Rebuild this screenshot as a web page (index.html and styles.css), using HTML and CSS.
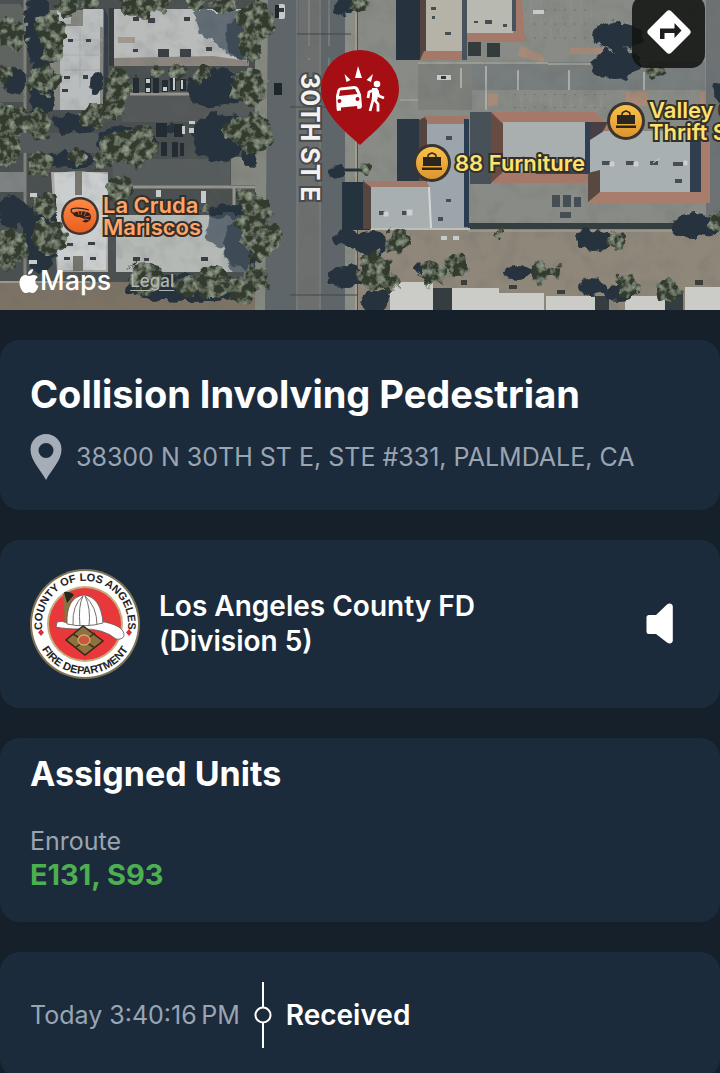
FILE: index.html
```html
<!DOCTYPE html>
<html lang="en">
<head>
<meta charset="utf-8">
<meta name="viewport" content="width=device-width, initial-scale=1">
<title>Collision Involving Pedestrian</title>
<link rel="stylesheet" href="styles.css">
</head>
<body>
<main class="screen">
  <section class="map" aria-label="Map">
    <svg class="aerial" viewBox="0 0 720 310" preserveAspectRatio="xMidYMid slice" aria-hidden="true">
      <defs>
        <filter id="leaf" x="-5%" y="-5%" width="110%" height="110%">
          <feTurbulence type="fractalNoise" baseFrequency="0.09" numOctaves="2" seed="4" result="n"/>
          <feDisplacementMap in="SourceGraphic" in2="n" scale="16" xChannelSelector="R" yChannelSelector="G" result="d"/>
          <feTurbulence type="fractalNoise" baseFrequency="0.13" numOctaves="3" seed="9"/>
          <feColorMatrix values="0 0 0 0 0.36  0 0 0 0 0.42  0 0 0 0 0.32  2 0 0 0 -0.85" result="t"/>
          <feComposite in="t" in2="d" operator="in" result="tt"/>
          <feMerge result="m"><feMergeNode in="d"/><feMergeNode in="tt"/></feMerge>
          <feGaussianBlur in="m" stdDeviation="0.7"/>
        </filter>
        <filter id="shade" x="-5%" y="-5%" width="110%" height="110%">
          <feTurbulence type="fractalNoise" baseFrequency="0.1" numOctaves="2" seed="2" result="n"/>
          <feDisplacementMap in="SourceGraphic" in2="n" scale="12" xChannelSelector="R" yChannelSelector="G" result="d"/>
          <feGaussianBlur in="d" stdDeviation="0.7"/>
        </filter>
        <filter id="ground" x="0" y="0" width="100%" height="100%">
          <feTurbulence type="fractalNoise" baseFrequency="0.05" numOctaves="4" seed="7"/>
          <feColorMatrix values="0 0 0 0 0.12  0 0 0 0 0.13  0 0 0 0 0.13  1.6 0 0 0 -0.72"/>
        </filter>
        <pattern id="stalls" width="10" height="14" patternUnits="userSpaceOnUse"><path d="M1 0v9" stroke="#989992" stroke-width="1"/><circle cx="5" cy="10" r="1.3" fill="#686b69"/></pattern>
      </defs>
      <rect width="720" height="310" fill="#4a4f50"/>
      <!-- west lots -->
      <path d="M0 4h20l5 8v90H0z" fill="#5f6460"/>
      <path d="M25 0v310" stroke="#81837a" stroke-width="3"/>
      <rect x="14" y="133" width="86" height="20" fill="#54595b"/>
      <rect x="0" y="172" width="26" height="20" fill="#7e8283"/>
      <path d="M118 94h140v28H122z" fill="#555859"/>
      <path d="M113 159h117v27H113z" fill="#565b5c"/>
      <path d="M130 94h60M120 187h140M234 187v24" stroke="#94948c" stroke-width="3" fill="none"/>
      <rect x="231" y="157" width="27" height="28" fill="#858880"/>
      <path d="M0 282h258v28H0z" fill="#7d7365"/>
      <path d="M0 282h90" stroke="#9b9890" stroke-width="2"/>
      <path d="M255 0h13v310h-13z" fill="#85887f"/>
      <!-- west roofs -->
      <path d="M50 10h55v100H50z" fill="#858680"/>
      <path d="M60 26h40v84H60zM83 9h20v18H83zM57 10h14v14H57z" fill="#b9bdbd"/>
      <path d="M104 8l4 8v92h-5z" fill="#343e48"/>
      <path d="M62 40h40M63 55h38M64 70h36M80 27v60" stroke="#a8adaf" stroke-width="1"/>
      <path d="M113 9h134v55H113z" fill="#b9bcba"/>
      <path d="M113 58l100-2 36 5v5H111z" fill="#8b857e"/>
      <path d="M109 8h5v58h-5z" fill="#363b40"/>
      <path d="M118 37h17v6h-17z" fill="#a3988e"/>
      <path d="M51 172h57v100H57z" fill="#aaa9a2"/>
      <path d="M54 173l24-2 30 3-2 96H58z" fill="#cbcecf"/>
      <path d="M75 171h7v24h-7zM73 256h10v15H73z" fill="#77756e"/>
      <path d="M115 215h133v57H116z" fill="#b5b9b6"/>
      <path d="M108 205h8v68h-8z" fill="#4b5053"/>
      <g fill="#383e43">
        <path d="M133 17h6v4h-6zM148 18h7v5h-7zM184 17h6v4h-6zM133 49h5v3h-5zM158 49h11v8h-11zM180 49h11v8h-11zM206 47h6v4h-6zM68 39h5v3h-5zM86 39h5v3h-5zM64 76h6v3h-6zM83 75h5v4h-5zM62 89h6v3h-6zM67 243h6v3h-6zM88 242h7v3h-7zM64 257h6v3h-6zM90 257h6v3h-6zM133 257h7v4h-7zM144 258h5v3h-5zM201 257h7v4h-7z"/>
      </g>
      <!-- 30th Street -->
      <path d="M268 0h77v310h-80z" fill="#5f666a"/>
      <path d="M299 0h22v310h-25z" fill="#6d6f6e"/>
      <path d="M297 0v310M320 0v310" stroke="#7f8380" stroke-width="1"/>
      <path d="M309 0v60M329 0v70" stroke="#8d9292" stroke-width="1" stroke-dasharray="46 12"/>
      <path d="M345 0h12v310h-12z" fill="#8b8e86"/>
      <path d="M356 0v310" stroke="#a39c8c" stroke-width="2"/>
      <path d="M297 34h54M290 107h55M290 295h72" stroke="#41474a" stroke-width="1"/>
      <!-- east lots -->
      <path d="M358 0h362v230H358z" fill="#898c86"/>
      <path d="M463 62h242v28H463z" fill="#787d7d"/>
      <path d="M418 62h54v48h-54z" fill="#7d807b"/>
      <path d="M418 63h130M548 64h100M400 100h18" stroke="#9b9c94" stroke-width="2"/>
      <path d="M518 70v20M569 70v20M644 72v18M486 66v44M461 68v20" stroke="#aaaca6" stroke-width="2"/>
      <rect x="506" y="94" width="100" height="14" fill="url(#stalls)" opacity=".6"/>
      <rect x="525" y="0" width="70" height="42" fill="url(#stalls)" opacity=".4"/>
      <path d="M570 48h34v6h-34zM520 46l22 8 2 8-26-6zM488 93l10 1v12h-10zM626 92h22v14h-22zM700 92h10v12h-10z" fill="#a88a78"/>
      <path d="M706 0h14v230h-14z" fill="#6d7374"/>
      <path d="M358 230h362v80H358z" fill="#8f877a"/>
      <rect width="720" height="310" filter="url(#ground)" opacity=".35"/>
      <path d="M468 223h206v6H468z" fill="#353e3f"/>
      <path d="M468 231h240" stroke="#a8a498" stroke-width="1"/>
      <!-- east roofs -->
      <path d="M396 0h24v60h-24z" fill="#26333f"/>
      <path d="M420 0h6v60h-6z" fill="#554542"/>
      <path d="M426 0h36v52h-36z" fill="#b5b3a8"/>
      <path d="M424 51h38l4 9h-46z" fill="#a57868"/>
      <path d="M467 0h47v33h-47z" fill="#b8b9b1"/>
      <path d="M513 0h9l3 42h-58v-9h46z" fill="#a57969"/>
      <path d="M512 0h4v31h-4zM462 0h5v60h-5z" fill="#47525d"/>
      <path d="M468 42h13v14h-13zM487 43h13v14h-13z" fill="#343b3c"/>
      <path d="M397 119h22v62h-22z" fill="#2b3743"/>
      <path d="M419 120l8-4v72h-8z" fill="#55443f"/>
      <path d="M424 116h44l-4 9h-34z" fill="#a07768"/>
      <path d="M427 124h37v104h-37z" fill="#9ca5ab"/>
      <path d="M464 119h5v108h-5z" fill="#293c50"/>
      <path d="M342 182h28v48h-28z" fill="#25333e"/>
      <path d="M363 180l8 7v42h-8z" fill="#55463f"/>
      <path d="M363 181h63l4 7h-58z" fill="#a1796b"/>
      <path d="M371 187h57l4 41h-61z" fill="#a8afb1"/>
      <path d="M429 187l2 41" stroke="#d5d8d4" stroke-width="2"/>
      <path d="M371 229h99" stroke="#bdbfb9" stroke-width="2"/>
      <path d="M470 112h21v72h-21z" fill="#485058"/>
      <path d="M491 112h104l18 18-13 48-16 5H491z" fill="#a57869"/>
      <path d="M491 112l12 12v48l-12 11z" fill="#684b42"/>
      <path d="M503 122h84v51h-84z" fill="#a9aeaf"/>
      <path d="M530 163h58v11h-52z" fill="#384552"/>
      <path d="M585 122h5v52h-5z" fill="#2e4053"/>
      <path d="M590 122h18l-6 11-12 8z" fill="#473f43"/>
      <path d="M590 140l14-9h98v61H600l-10-19z" fill="#a9b0b1"/>
      <path d="M700 140h10v63H588l12-11h92z" fill="#a87d6c"/>
      <path d="M690 136h11v56h-11z" fill="#303e4d"/>
      <path d="M588 173l12-3v22l-12 10z" fill="#594840"/>
      <g fill="#454e53">
        <path d="M431 7h5v3h-5zM445 32h6v3h-6zM432 16h3v3h-3zM485 20h7v4h-7zM474 21h4v2h-4zM503 24h4v3h-4zM446 136h6v4h-6zM446 199h5v3h-5zM438 217h5v4h-5zM379 211h6v4h-6zM402 211h6v4h-6zM602 161h8v4h-8zM626 161h8v4h-8zM650 161h8v4h-8zM673 162h10v4h-10zM675 179h7v4h-7zM552 195h8v12h-8zM563 195h8v12h-8zM574 197h7v10h-7zM560 212h11v6h-11z"/>
      </g>
      <path d="M610 162h4v4h-4zM634 162h4v4h-4zM653 163l7-5M684 161h3v4h-3zM384 212h4v4h-4zM407 210h5v5h-5z" fill="#cdd0cd" stroke="#cdd0cd"/>
      <!-- southern roofs -->
      <g fill="#cbccc8">
        <path d="M390 282h43v28h-43zM452 288h47v22h-47zM498 293h46v17h-46zM546 296h49v14h-49zM625 296h40v14h-40zM685 287h35v23h-35z"/>
      </g>
      <path d="M433 288h19v22h-19zM595 296h14v14h-14zM665 290h18v20h-18z" fill="#353d41"/>
      <path d="M461 280h6v5h-6zM509 285h8v4h-8zM557 290h8v4h-8zM695 280h8v5h-8z" fill="#3b3e3c"/>
      <!-- tree shade -->
      <g fill="#27323c" filter="url(#shade)">
        <ellipse cx="38" cy="30" rx="13" ry="36"/><ellipse cx="42" cy="90" rx="13" ry="34"/>
        <ellipse cx="15" cy="82" rx="11" ry="14"/><ellipse cx="13" cy="212" rx="15" ry="15"/>
        <ellipse cx="40" cy="236" rx="17" ry="38"/><ellipse cx="216" cy="88" rx="31" ry="19"/>
        <ellipse cx="219" cy="137" rx="27" ry="25"/><ellipse cx="126" cy="142" rx="30" ry="16"/>
        <ellipse cx="167" cy="129" rx="10" ry="7"/><ellipse cx="75" cy="123" rx="24" ry="10"/>
        <ellipse cx="70" cy="160" rx="24" ry="8"/><ellipse cx="238" cy="38" rx="13" ry="21"/>
        <ellipse cx="244" cy="242" rx="21" ry="27"/><ellipse cx="233" cy="211" rx="24" ry="8"/>
        <ellipse cx="190" cy="289" rx="68" ry="13"/><ellipse cx="96" cy="83" rx="6" ry="12"/>
        <ellipse cx="619" cy="36" rx="25" ry="14"/><ellipse cx="617" cy="64" rx="24" ry="15"/>
        <ellipse cx="347" cy="238" rx="14" ry="9"/><ellipse cx="346" cy="277" rx="18" ry="11"/>
        <ellipse cx="372" cy="245" rx="16" ry="14"/><ellipse cx="338" cy="171" rx="9" ry="7"/>
        <ellipse cx="594" cy="240" rx="17" ry="11"/><ellipse cx="518" cy="272" rx="15" ry="8"/>
        <ellipse cx="695" cy="226" rx="24" ry="12"/><ellipse cx="592" cy="287" rx="14" ry="8"/>
        <ellipse cx="344" cy="6" rx="9" ry="9"/><ellipse cx="718" cy="92" rx="5" ry="10"/>
        <ellipse cx="425" cy="269" rx="10" ry="7"/><ellipse cx="619" cy="293" rx="16" ry="8"/>
        <ellipse cx="375" cy="302" rx="13" ry="12"/><ellipse cx="250" cy="145" rx="8" ry="22"/>
      </g>
      <g fill="#46525e" opacity=".75" filter="url(#shade)">
        <path d="M192 10h56v50h-16l-14-16-20-14z"/><path d="M210 213h40v60h-18l-10-24-16-8z"/>
      </g>
      <path d="M341 170h24" stroke="#27323c" stroke-width="3"/>
      <!-- trees -->
      <g fill="#303b2f" filter="url(#leaf)">
        <circle cx="10" cy="35" r="17"/><circle cx="50" cy="30" r="15"/><circle cx="52" cy="48" r="12"/><circle cx="45" cy="80" r="15"/>
        <circle cx="4" cy="73" r="8"/><circle cx="9" cy="120" r="19"/><circle cx="38" cy="124" r="14"/><circle cx="5" cy="152" r="15"/>
        <circle cx="40" cy="163" r="13"/><circle cx="8" cy="248" r="19"/><circle cx="50" cy="237" r="17"/><circle cx="46" cy="206" r="13"/>
        <circle cx="119" cy="84" r="15"/><circle cx="114" cy="106" r="13"/><circle cx="92" cy="118" r="12"/><circle cx="137" cy="145" r="20"/>
        <circle cx="112" cy="147" r="14"/><circle cx="104" cy="160" r="10"/><circle cx="120" cy="190" r="14"/><circle cx="78" cy="158" r="9"/>
        <circle cx="67" cy="3" r="12"/><circle cx="135" cy="2" r="17"/><circle cx="160" cy="1" r="12"/><circle cx="196" cy="-2" r="12"/>
        <circle cx="90" cy="0" r="9"/><circle cx="225" cy="2" r="12"/>
        <circle cx="256" cy="20" r="19"/><circle cx="250" cy="45" r="14"/><circle cx="248" cy="87" r="18"/><circle cx="253" cy="133" r="20"/>
        <circle cx="236" cy="130" r="13"/><circle cx="158" cy="72" r="7"/><circle cx="179" cy="72" r="8"/><circle cx="202" cy="74" r="8"/>
        <circle cx="256" cy="212" r="16"/><circle cx="261" cy="238" r="20"/><circle cx="243" cy="222" r="9"/><circle cx="214" cy="282" r="17"/>
        <circle cx="145" cy="278" r="17"/><circle cx="188" cy="286" r="12"/><circle cx="256" cy="280" r="13"/><circle cx="247" cy="197" r="8"/>
        <circle cx="240" cy="290" r="13"/><circle cx="359" cy="5" r="8"/><circle cx="365" cy="170" r="6"/><circle cx="398" cy="241" r="13"/>
        <circle cx="374" cy="271" r="18"/><circle cx="392" cy="285" r="8"/><circle cx="433" cy="273" r="12"/><circle cx="456" cy="265" r="11"/>
        <circle cx="617" cy="240" r="9"/><circle cx="540" cy="272" r="10"/><circle cx="552" cy="272" r="6"/><circle cx="628" cy="286" r="11"/>
        <circle cx="498" cy="235" r="4"/><circle cx="460" cy="264" r="6"/><circle cx="668" cy="290" r="11"/><circle cx="655" cy="70" r="8"/>
        <circle cx="718" cy="222" r="10"/><circle cx="205" cy="210" r="5"/>
      </g>
      <!-- parked cars -->
      <g fill="#232c33">
        <path d="M133 78h6v15h-6zM145 78h6v15h-6zM153 78h6v15h-6zM162 80h6v12h-6zM170 78h6v13h-6zM180 79h6v12h-6zM156 123h11v14h-11zM174 124h9v13h-9zM161 142h6v14h-6zM172 142h6v15h-6zM180 143h4v13h-4z"/>
      </g>
      <g fill="#c5cacb">
        <path d="M146 79h4v4h-4zM146 88h4v4h-4zM163 87h4v4h-4zM173 78h2v12h-2zM181 80h2v9h-2zM189 121h6v3h-6zM189 128h5v5h-5zM182 126h3v8h-3zM156 190h5v7h-5zM201 191h5v12h-5zM30 193h7v4h-7zM29 260h8v4h-8zM437 75h14v5h-14zM533 10h11v4h-11zM441 236h6v4h-6zM453 236h6v4h-6z"/>
        <rect x="278" y="4" width="7" height="15" rx="2"/>
      </g>
      <path d="M274 83h9v12h-9zM275 5h4v13h-4z" fill="#1e262a"/><path d="M282 83h5v12h-5z" fill="#5c6568"/>
      <path d="M279 8h5v4h-5zM441 76h5v3h-5z" fill="#30383c"/>
    </svg>

    <span class="street">30TH ST E</span>

    <div class="poi poi-food">
      <svg class="poi-icon" viewBox="0 0 38 38" aria-hidden="true">
        <defs><linearGradient id="og" x2="0" y2="1"><stop stop-color="#ff8a45"/><stop offset="1" stop-color="#e85f20"/></linearGradient></defs>
        <circle cx="19" cy="19" r="19" fill="#3f3431"/><circle cx="19" cy="19" r="16.500" fill="url(#og)"/>
        <path d="M28 13c-7-2-17-3-18 0 0 3 3 4 6 4" fill="none" stroke="#33211c" stroke-width="1.200"/>
        <path d="M12 16c4-2 10-2 14-1 4 1 5 5 3 8-2 3-6 3-8 1 2 0 3-1 3-2-2-1-4-1-6-2-3 0-6-1-6-4z" fill="#33211c"/>
        <path d="M17 14l1 4M21 14l-1 4M25 15l-2 4M29 19l-5 1M28 23l-4-1" stroke="#ef7030" stroke-width=".8"/>
      </svg>
      <span>La Cruda<br>Mariscos</span>
    </div>
    <div class="poi poi-shop">
      <svg class="poi-icon" viewBox="0 0 38 38" aria-hidden="true">
        <defs><linearGradient id="yg" x2="0" y2="1"><stop stop-color="#f9c249"/><stop offset="1" stop-color="#dd942f"/></linearGradient></defs>
        <circle cx="19" cy="19" r="19" fill="#39342f"/><circle cx="19" cy="19" r="16" fill="url(#yg)"/>
        <path d="M15 14v-2q0-2 4-3 4 1 4 3v2" fill="none" stroke="#292521" stroke-width="1.500"/>
        <path d="M10 13h18v9H10zM9 23.500h20V26H9z" fill="#292521"/>
      </svg>
      <span>88 Furniture</span>
    </div>
    <div class="poi poi-thrift">
      <svg class="poi-icon" viewBox="0 0 38 38" aria-hidden="true">
        <circle cx="19" cy="19" r="19" fill="#39342f"/><circle cx="19" cy="19" r="16" fill="url(#yg)"/>
        <path d="M15 14v-2q0-2 4-3 4 1 4 3v2" fill="none" stroke="#292521" stroke-width="1.500"/>
        <path d="M10 13h18v9H10zM9 23.500h20V26H9z" fill="#292521"/>
      </svg>
      <span>Valley O<br>Thrift S</span>
    </div>

    <svg class="incident-pin" viewBox="0 0 80 96" role="img" aria-label="Incident location">
      <path d="M40 96C26 83 1 64 1 40a39 39 0 0 1 78 0C79 64 54 83 40 96z" fill="#a50e13"/>
      <g fill="#fff">
        <path d="M38 17l4 12h-7zM24.500 25l6 6-4 2zM53 25l-2 8-4.500-2z"/>
        <path fill-rule="evenodd" d="M20.500 38.500l14-1.500q3 0 4 2.500l2.500 6 1 12-1 2-3.500.5-.5-3-16 1.500v3l-4 .5-.5-3-.5-12 1.500-6q.5-2 3-2.500zM20 41.500l-1 5.500 18.500-2-2.500-5zM19.500 50a2 2 0 1 0 0 4 2 2 0 0 0 0-4zM37.500 48a2 2 0 1 0 0 4 2 2 0 0 0 0-4z"/>
        <circle cx="57" cy="35" r="3.300"/>
      </g>
      <path d="M54 41l-1 10-3 11M54 50l4 5v7.500M54 41l-5 2-1 6M56 41l3 6 5 2" fill="none" stroke="#fff" stroke-width="2.800" stroke-linejoin="round"/>
      <path d="M52 39h5l2 3-2 10-5-1z" fill="#fff"/>
    </svg>

    <div class="map-credit">
      <span class="brand">
        <svg class="apple" viewBox="0 0 20 26" aria-hidden="true"><path fill="#fff" d="M14 1c0 3-2 5.500-5 5.500C8.800 4 11 1.500 14 1zM10 8c1.300 0 2.500-1 4.500-1 1.800 0 3.400.9 4.300 2.300-3.700 2.200-3.200 7.200.7 8.800C18.300 21.500 16.500 25 14 25c-1.500 0-2-.8-3.800-.8S7.800 25 6.400 25C3.500 25 .5 19.500.5 14.800.5 10 3.300 7 6.300 7 7.900 7 9.200 8 10 8z"/></svg>
        <span>Maps</span>
      </span>
      <a class="legal" href="#">Legal</a>
    </div>

    <button class="directions" type="button" aria-label="Directions">
      <svg viewBox="0 0 46 46" aria-hidden="true">
        <path d="M20.500 2.500q2.500-2.500 5 0l18 18q2.500 2.500 0 5l-18 18q-2.500 2.500-5 0l-18-18q-2.500-2.500 0-5z" fill="#fff"/>
        <path d="M14 30V19.500h14.500V14l7 7.500-7 7.500v-5H18.500v6z" fill="#1c1d1b"/>
      </svg>
    </button>
  </section>

  <section class="card">
    <h1>Collision Involving Pedestrian</h1>
    <p class="address">
      <svg class="place" viewBox="0 0 32 46" aria-hidden="true"><path fill="#a5adb8" fill-rule="evenodd" d="M16 0a15.500 15.500 0 0 1 15.500 15.500C31.500 27 21 36 16 46 11 36 .5 27 .5 15.500A15.500 15.500 0 0 1 16 0zm0 9a7.500 7.500 0 1 0 0 15 7.500 7.500 0 0 0 0-15z"/></svg>
      <span>38300 N 30TH ST E, STE #331, PALMDALE, CA</span>
    </p>
  </section>

  <section class="card agency">
    <svg class="seal" viewBox="0 0 110 110" role="img" aria-label="County of Los Angeles Fire Department seal">
      <defs>
        <path id="arc-top" d="M17 75a43 43 0 1 1 76 0"/>
        <path id="arc-bottom" d="M5 55a50 50 0 0 0 100 0"/>
      </defs>
      <circle cx="55" cy="55" r="55" fill="#7d7454"/><circle cx="55" cy="55" r="53" fill="#fff"/>
      <circle cx="55" cy="55" r="38" fill="#c5ad7c"/><circle cx="55" cy="55" r="36" fill="#e8383b"/>
      <text class="seal-text"><textPath href="#arc-top" startOffset="50%" text-anchor="middle">COUNTY OF LOS ANGELES</textPath></text>
      <text class="seal-text"><textPath href="#arc-bottom" startOffset="50%" text-anchor="middle">FIRE DEPARTMENT</textPath></text>
      <path d="M11 60l3 3.500-3 3.500-3-3.500zM99 60l3 3.500-3 3.500-3-3.500z" fill="#d8303a"/>
      <path d="M33 25q6-4 12 1l-5 9-1 20-4 1z" fill="#8d7142"/><path d="M34 23q6-1 10 3l-7 8z" fill="#29251c"/>
      <path d="M27 53q5-2 10 1l32-2q26 4 25 15-2 4-8 3Q73 59 51 60q-17 0-25-2z" fill="#fff" stroke="#5e554d" stroke-width=".8"/>
      <path d="M37 55q-1-27 17-29 17 2 19 28-18 5-36 1z" fill="#fff" stroke="#68605a" stroke-width=".9"/>
      <path d="M43 56q-1-20 10-29M50 57q-2-20 3-30M59 57q2-18-4-30M67 56q0-18-12-29" fill="none" stroke="#766f68" stroke-width="1"/>
      <path d="M53 57L36 71l19 15 18-14z" fill="#8f713e" stroke="#332719" stroke-width="1.500"/>
      <path d="M43 65l22 14M45 79l20-15" stroke="#3f301d" stroke-width="1.500"/>
      <ellipse cx="54" cy="71" rx="6" ry="5" fill="#c8573d" stroke="#d0ac69" stroke-width="1.300"/>
    </svg>
    <h2 class="agency-name">Los Angeles County FD (Division 5)</h2>
    <button class="audio" type="button" aria-label="Play audio">
      <svg viewBox="0 0 28 42" aria-hidden="true"><path fill="#fff" d="M3 12h7L21 1.500q3-2 5 0 .8.800.8 2v34q0 1.200-.8 2-2 2-5 0L10 31H3q-2.500 0-2.500-2.500v-14Q.5 12 3 12z"/></svg>
    </button>
  </section>

  <section class="card units">
    <h2>Assigned Units</h2>
    <p class="status">Enroute</p>
    <p class="unit-list">E131, S93</p>
  </section>

  <section class="card event">
    <time>Today 3:40:16&#8239;PM</time>
    <svg class="marker" viewBox="0 0 18 66" aria-hidden="true"><path d="M9 0v25M9 41v25" stroke="#fff" stroke-width="2"/><circle cx="9" cy="33" r="7.500" fill="none" stroke="#fff" stroke-width="2"/></svg>
    <strong>Received</strong>
  </section>
</main>
</body>
</html>
```
FILE: styles.css
```css
* { box-sizing: border-box; }

body {
  margin: 0;
  background: #15202b;
  color: #fff;
  font-family: Inter, "Liberation Sans", sans-serif;
}

.screen {
  display: flex;
  flex-direction: column;
  gap: 30px;
  height: 100vh;
  overflow-y: auto;
  scrollbar-width: none;
}

.screen > * { flex-shrink: 0; }

h1, h2, p { margin: 0; }

button {
  border: 0;
  padding: 0;
  background: none;
  cursor: pointer;
}

svg { display: block; }

/* Map */
.map {
  position: relative;
  height: 310px;
  overflow: hidden;
}

.aerial { width: 100%; height: 100%; }

.street {
  position: absolute;
  left: 296px;
  top: 73px;
  writing-mode: vertical-rl;
  font-size: 25px;
  font-weight: 700;
  line-height: 28px;
  color: #f2f2ef;
  -webkit-text-stroke: 4px #474b4c;
  paint-order: stroke fill;
}

.poi {
  position: absolute;
  display: flex;
  align-items: center;
  gap: 4px;
  font-size: 22px;
  font-weight: 600;
  line-height: 22px;
  white-space: nowrap;
  color: #ffe16b;
  -webkit-text-stroke: 4px #33302b;
  paint-order: stroke fill;
}

.poi-icon { width: 38px; height: 38px; }
.poi-food { left: 61px; top: 194px; color: #ffa567; }
.poi-shop { left: 413px; top: 144px; }
.poi-thrift { left: 607px; top: 99px; }

.incident-pin {
  position: absolute;
  left: 320px;
  top: 49px;
  width: 80px;
  height: 96px;
}

.map-credit {
  position: absolute;
  left: 19px;
  bottom: 12px;
  display: flex;
  align-items: center;
  gap: 19px;
}

.brand {
  display: flex;
  align-items: center;
  gap: 1px;
  font-size: 27px;
  font-weight: 500;
  line-height: 34px;
}

.apple { width: 20px; height: 26px; }

.legal {
  color: #b1b5b1;
  font-size: 17px;
  font-weight: 500;
  text-decoration: underline;
  text-underline-offset: 3px;
}

.directions {
  position: absolute;
  right: 15px;
  top: -5px;
  display: grid;
  place-items: center;
  width: 73px;
  height: 73px;
  border-radius: 14px;
  background: rgba(18, 20, 18, 0.88);
}

.directions svg { width: 46px; height: 46px; }

/* Cards */
.card {
  padding: 30px;
  border-radius: 20px;
  background: #1c2b3b;
}

h1 {
  margin-bottom: 16px;
  font-size: 38px;
  font-weight: 700;
  line-height: 48px;
}

.address {
  display: flex;
  align-items: center;
  gap: 14px;
  color: #9aa5b3;
  font-size: 25px;
}

.place {
  flex: none;
  width: 32px;
  height: 46px;
}

.agency {
  display: flex;
  align-items: center;
  gap: 19px;
  padding: 29px 30px;
}

.seal {
  flex: none;
  width: 110px;
  height: 110px;
}

.seal-text {
  font-family: "Liberation Sans", sans-serif;
  font-size: 11px;
  font-weight: 700;
  fill: #25221f;
}

.agency-name {
  width: 360px;
  font-size: 28px;
  font-weight: 600;
  line-height: 35px;
}

.audio { margin: 0 16px 0 auto; }
.audio svg { width: 28px; height: 42px; }

.units { padding-top: 15px; }

.units h2 {
  margin-bottom: 29px;
  font-size: 34px;
  font-weight: 700;
  line-height: 42px;
}

.status {
  color: #9aa5b3;
  font-size: 25px;
  line-height: 34px;
}

.unit-list {
  color: #4caf50;
  font-size: 29px;
  font-weight: 700;
  line-height: 34px;
}

.event {
  display: flex;
  align-items: center;
  gap: 14px;
}

.event time {
  color: #9aa5b3;
  font-size: 25px;
}

.event strong {
  font-size: 28px;
  font-weight: 600;
}

.marker {
  width: 18px;
  height: 66px;
}
```
